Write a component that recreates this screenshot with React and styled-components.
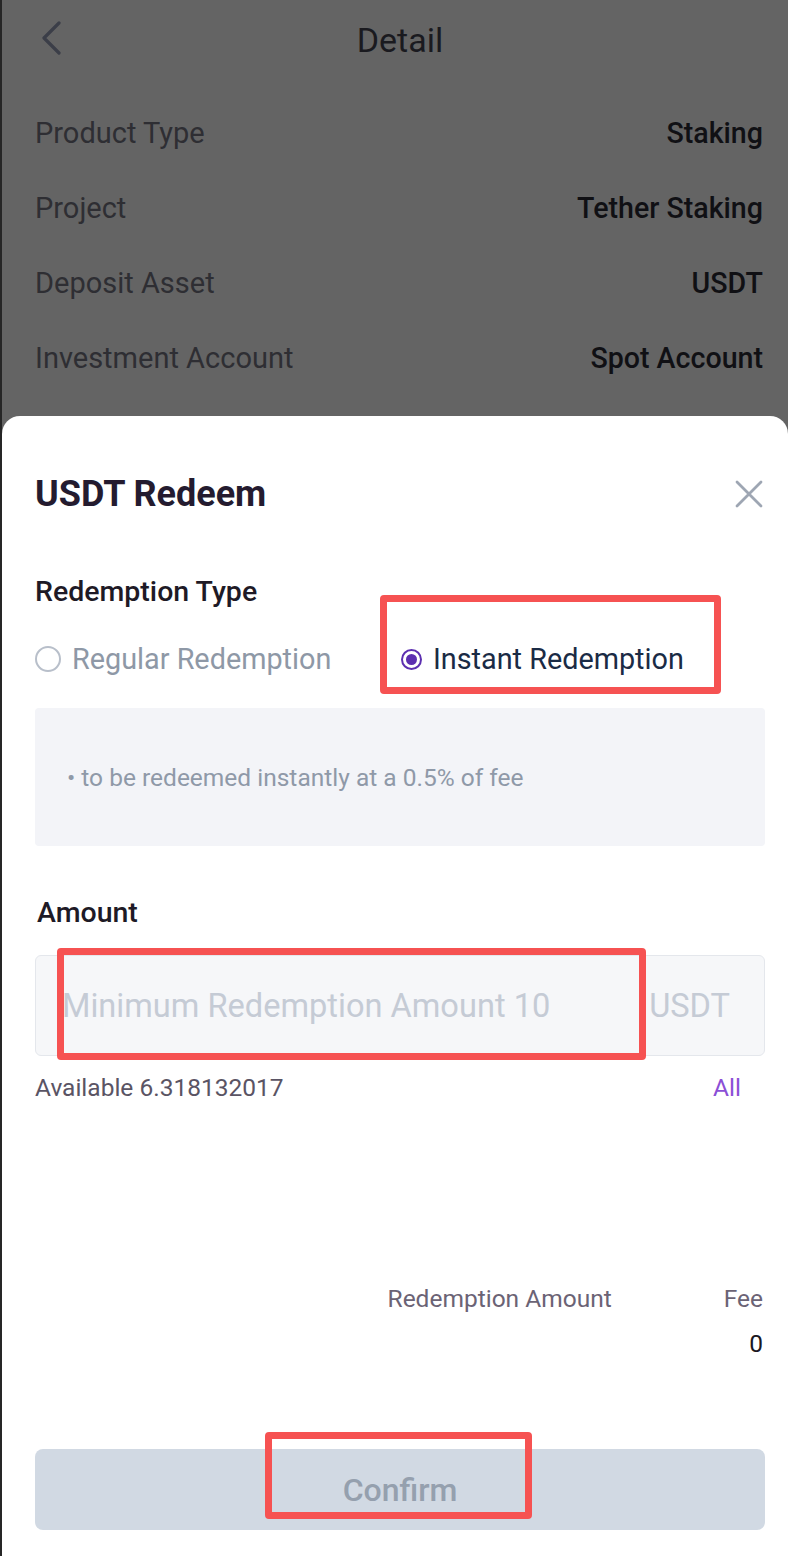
import React from 'react'
import styled, { createGlobalStyle } from 'styled-components'

const GlobalStyle = createGlobalStyle`
    html, body {
        margin: 0;
        padding: 0;
        background: #646464;
    }
    body {
        font-family: Roboto, "Noto Sans", "Liberation Sans", sans-serif;
        -webkit-font-smoothing: antialiased;
    }
    * {
        box-sizing: border-box;
    }
`

const details = [
    { label: 'Product Type', value: 'Staking' },
    { label: 'Project', value: 'Tether Staking' },
    { label: 'Deposit Asset', value: 'USDT' },
    { label: 'Investment Account', value: 'Spot Account' },
]

const App = () => {
    return (
        <Page>
            <GlobalStyle />
            <Header>
                <BackButton aria-label="back">
                    <svg width="22" height="34" viewBox="0 0 22 34" fill="none">
                        <path d="M18 2 L3 17 L18 32" stroke="#3b3e48" strokeWidth="3.2" strokeLinecap="round" strokeLinejoin="round" />
                    </svg>
                </BackButton>
                <HeaderTitle>Detail</HeaderTitle>
                <span />
            </Header>
            <DetailList>
                {details.map((d) => (
                    <DetailRow key={d.label}>
                        <DetailLabel>{d.label}</DetailLabel>
                        <DetailValue>{d.value}</DetailValue>
                    </DetailRow>
                ))}
            </DetailList>

            <Sheet>
                <SheetHeader>
                    <SheetTitle>USDT Redeem</SheetTitle>
                    <CloseButton aria-label="close">
                        <svg width="28" height="28" viewBox="0 0 28 28" fill="none">
                            <path d="M2 2 L26 26 M26 2 L2 26" stroke="#9ea6b3" strokeWidth="2.8" strokeLinecap="round" />
                        </svg>
                    </CloseButton>
                </SheetHeader>

                <SectionLabel $top={51}>Redemption Type</SectionLabel>
                <RadioGroup>
                    <RadioOption>
                        <RadioCircle />
                        <RadioText>Regular Redemption</RadioText>
                    </RadioOption>
                    <RadioOption>
                        <RadioCircle $checked />
                        <RadioText $checked>Instant Redemption</RadioText>
                    </RadioOption>
                </RadioGroup>

                <InfoBox>• to be redeemed instantly at a 0.5% of fee</InfoBox>

                <SectionLabel $top={50} $shift={2}>Amount</SectionLabel>
                <AmountField>
                    <AmountInput placeholder="Minimum Redemption Amount 10" />
                    <Unit>USDT</Unit>
                </AmountField>
                <AvailableRow>
                    <Available>Available 6.318132017</Available>
                    <AllLink>All</AllLink>
                </AvailableRow>

                <Summary>
                    <SummaryLabel>Redemption Amount</SummaryLabel>
                    <SummaryLabel>Fee</SummaryLabel>
                    <SummaryValue></SummaryValue>
                    <SummaryValue>0</SummaryValue>
                </Summary>

                <ConfirmButton disabled>Confirm</ConfirmButton>
            </Sheet>

            <Highlight $left={378} $top={595} $width={341} $height={99} />
            <Highlight $left={55} $top={948} $width={589} $height={112} />
            <Highlight $left={263} $top={1432} $width={267} $height={87} />
        </Page>
    )
}
export default App

const Page = styled.div`
    position: relative;
    width: 788px;
    min-height: 1556px;
    display: flex;
    flex-direction: column;
    background: #646464;
    border-left: 2px solid #262626;
`

const Header = styled.header`
    height: 80px;
    display: grid;
    grid-template-columns: 1fr auto 1fr;
    align-items: center;
    padding: 0 23px 0 33px;
`

const BackButton = styled.button`
    justify-self: start;
    display: flex;
    margin: -4px 0 0 6px;
    padding: 0;
    border: none;
    background: none;
`

const HeaderTitle = styled.h1`
    margin: 0;
    font-size: 34px;
    font-weight: 400;
    color: #1a1a1f;
`

const DetailList = styled.div`
    padding: 15px 25px 0 33px;
`

const DetailRow = styled.div`
    height: 75px;
    display: flex;
    align-items: center;
    justify-content: space-between;
`

const DetailLabel = styled.span`
    font-size: 29px;
    color: #2e2e33;
`

const DetailValue = styled.span`
    font-size: 28.6px;
    font-weight: 500;
    color: #101014;
`

const Sheet = styled.section`
    flex: 1;
    margin-top: 21px;
    display: flex;
    flex-direction: column;
    background: #fff;
    border-radius: 18px 18px 0 0;
    padding: 0 23px 26px 33px;
`

const SheetHeader = styled.div`
    margin-top: 48px;
    height: 60px;
    display: flex;
    align-items: center;
    justify-content: space-between;
`

const SheetTitle = styled.h2`
    margin: 0;
    font-size: 36px;
    font-weight: 700;
    color: #241b2f;
`

const CloseButton = styled.button`
    display: flex;
    margin-right: 2px;
    padding: 0;
    border: none;
    background: none;
`

const SectionLabel = styled.h3`
    margin: ${(p) => p.$top}px 0 0 ${(p) => (p.$shift ? p.$shift : 0)}px;
    height: 34px;
    line-height: 34px;
    font-size: 28.5px;
    font-weight: 500;
    color: #1e1a26;
`

const RadioGroup = styled.div`
    margin-top: 30px;
    height: 40px;
    display: grid;
    grid-template-columns: 366px 1fr;
    align-items: center;
`

const RadioOption = styled.label`
    display: flex;
    align-items: center;
    gap: 11px;
`

const RadioCircle = styled.span`
    position: relative;
    flex: none;
    width: ${(p) => (p.$checked ? 21 : 26)}px;
    height: ${(p) => (p.$checked ? 21 : 26)}px;
    border-radius: 50%;
    border: 2px solid ${(p) => (p.$checked ? '#5c2fb0' : '#b8bfca')};

    &::after {
        content: '';
        display: ${(p) => (p.$checked ? 'block' : 'none')};
        position: absolute;
        inset: 3px;
        border-radius: 50%;
        background: #5c2fb0;
    }
`

const RadioText = styled.span`
    font-size: 28.8px;
    color: ${(p) => (p.$checked ? '#1a2b45' : '#8e98a6')};
`

const InfoBox = styled.div`
    margin-top: 29px;
    height: 138px;
    display: flex;
    align-items: center;
    padding-left: 32px;
    background: #f3f4f8;
    border-radius: 4px;
    font-size: 24.5px;
    color: #8f99a8;
`

const AmountField = styled.div`
    margin-top: 25px;
    height: 101px;
    display: flex;
    align-items: center;
    padding: 0 34px 0 26px;
    background: #f6f7f9;
    border: 1px solid #e4e7ec;
    border-radius: 6px;
`

const AmountInput = styled.input`
    flex: 1;
    min-width: 0;
    border: none;
    outline: none;
    background: transparent;
    padding: 0;
    font-family: inherit;
    font-size: 32.6px;
    color: #1a1722;

    &::placeholder {
        color: #c5cbd5;
    }
`

const Unit = styled.span`
    font-size: 32.6px;
    color: #c5cbd5;
`

const AvailableRow = styled.div`
    margin-top: 16px;
    height: 30px;
    display: flex;
    align-items: center;
    justify-content: space-between;
    padding-right: 24px;
`

const Available = styled.span`
    font-size: 24.5px;
    color: #5a5464;
`

const AllLink = styled.span`
    font-size: 24.5px;
    color: #8b4fd6;
`

const Summary = styled.div`
    margin-top: 182px;
    display: grid;
    grid-template-columns: auto auto;
    justify-content: end;
    column-gap: 112px;
    row-gap: 15px;
    padding-right: 2px;
    text-align: right;
`

const SummaryLabel = styled.span`
    height: 30px;
    line-height: 30px;
    font-size: 24.5px;
    color: #6b6375;
`

const SummaryValue = styled.span`
    height: 30px;
    line-height: 30px;
    font-size: 24.5px;
    color: #1a1722;
`

const ConfirmButton = styled.button`
    margin-top: 90px;
    height: 81px;
    width: 100%;
    border: none;
    border-radius: 8px;
    background: #d1d9e3;
    font-family: inherit;
    font-size: 32px;
    font-weight: 500;
    color: #95a0ae;
`

const Highlight = styled.div`
    position: absolute;
    left: ${(p) => p.$left}px;
    top: ${(p) => p.$top}px;
    width: ${(p) => p.$width}px;
    height: ${(p) => p.$height}px;
    border: 7px solid #f65252;
    border-radius: 4px;
    pointer-events: none;
`
